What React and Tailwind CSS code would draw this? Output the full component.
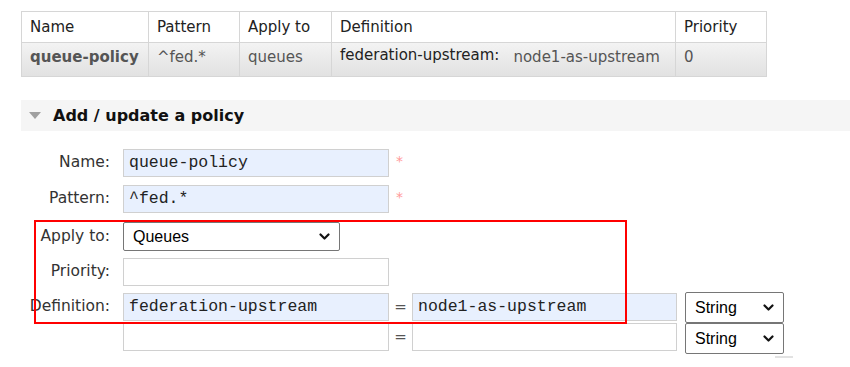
import React from 'react';

const sans = "font-['DejaVu_Sans',Verdana,sans-serif]";
const mono = "font-['Liberation_Mono','Courier_New',monospace]";
const arial = "font-['Liberation_Sans',Arial,sans-serif]";

function Chevron() {
  return (
    <svg width="11" height="8" viewBox="0 0 11 8" className="shrink-0">
      <path d="M1.5 1.5 L5.5 5.5 L9.5 1.5" fill="none" stroke="#111" strokeWidth="2.2" strokeLinecap="round" strokeLinejoin="round" />
    </svg>
  );
}

function FakeSelect({ value, className }) {
  return (
    <div className={`flex items-center justify-between border border-[#767676] rounded-[2px] bg-white pl-[9px] pr-[9px] ${arial} text-[16px] text-black ${className}`}>
      <span>{value}</span>
      <Chevron />
    </div>
  );
}

function TextBox({ value = '', filled = false, className = '' }) {
  return (
    <div className={`h-[28px] border border-[#d0d0d0] flex items-center pl-[5px] ${mono} text-[16.5px] text-[#222] ${filled ? 'bg-[#e8f0fe]' : 'bg-white'} ${className}`}>
      {value}
    </div>
  );
}

function Label({ children }) {
  return <div className={`w-[110px] text-right text-[15.5px] text-[#333] ${sans} whitespace-nowrap`}>{children}</div>;
}

export default function App() {
  const th = 'border border-[#d6d6d6] text-left font-normal px-[8px] h-[31px] align-middle bg-white text-[#222]';
  const td = 'border border-[#d6d6d6] px-[8px] h-[34px] align-top pt-[3px] text-[#555]';

  return (
    <div className={`relative w-[850px] h-[367px] overflow-hidden bg-white ${sans}`}>
      <div className="pt-[11px] pl-[21px]">
        <table className="border-collapse text-[15px] w-[746px]">
          <thead>
            <tr>
              <th className={`${th} w-[127px]`}>Name</th>
              <th className={`${th} w-[91px]`}>Pattern</th>
              <th className={`${th} w-[92px]`}>Apply to</th>
              <th className={`${th} w-[344px]`}>Definition</th>
              <th className={th}>Priority</th>
            </tr>
          </thead>
          <tbody className="bg-linear-to-b from-[#f3f3f3] to-[#e1e1e1]">
            <tr>
              <td className={`${td} font-bold text-[#111]`}>queue-policy</td>
              <td className={td}>^fed.*</td>
              <td className={td}>queues</td>
              <td className={td}>
                <div className="flex items-start">
                  <span className="text-[#222] -mt-[2px]">federation-upstream:</span>
                  <span className="ml-[14px]">node1-as-upstream</span>
                </div>
              </td>
              <td className={td}>0</td>
            </tr>
          </tbody>
        </table>
      </div>

      <div className="mt-[23px] ml-[21px] h-[31px] bg-[#f5f5f5] flex items-center">
        <svg width="12" height="7" viewBox="0 0 12 7" className="ml-[8px]">
          <path d="M0 0 H12 L6 7 Z" fill="#a0a0a0" />
        </svg>
        <span className="ml-[12px] text-[16px] font-bold text-[#111]">Add / update a policy</span>
      </div>

      <div className="mt-[18px] flex flex-col">
        <div className="flex items-center h-[28px] gap-[13px]">
          <Label>Name:</Label>
          <TextBox value="queue-policy" filled className="w-[266px]" />
          <span className="self-start mt-[2px] -ml-[6px] text-[14px] text-[#f99]">*</span>
        </div>
        <div className="flex items-center h-[28px] gap-[13px] mt-[8px]">
          <Label>Pattern:</Label>
          <TextBox value="^fed.*" filled className="w-[266px]" />
          <span className="self-start mt-[2px] -ml-[6px] text-[14px] text-[#f99]">*</span>
        </div>
        <div className="flex items-center h-[29px] gap-[13px] mt-[9px]">
          <Label>Apply to:</Label>
          <FakeSelect value="Queues" className="w-[217px] h-[29px]" />
        </div>
        <div className="flex items-center h-[28px] gap-[13px] mt-[7px]">
          <Label>Priority:</Label>
          <TextBox className="w-[266px]" />
        </div>
        <div className="flex items-start h-[31px] mt-[6px]">
          <div className="h-[28px] mt-[1px] flex items-center">
            <Label>Definition:</Label>
          </div>
          <TextBox value="federation-upstream" filled className="w-[266px] mt-[1px] ml-[13px]" />
          <div className="w-[23px] h-[28px] mt-[1px] flex items-center justify-center text-[15px] text-[#555]">=</div>
          <TextBox value="node1-as-upstream" filled className="w-[265px] mt-[1px]" />
          <FakeSelect value="String" className="w-[99px] h-[31px] ml-[8px]" />
        </div>
        <div className="flex items-start h-[31px]">
          <div className="w-[110px]" />
          <TextBox className="w-[266px] ml-[13px]" />
          <div className="w-[23px] h-[28px] flex items-center justify-center text-[15px] text-[#555]">=</div>
          <TextBox className="w-[265px]" />
          <FakeSelect value="String" className="w-[99px] h-[31px] ml-[8px]" />
        </div>
        <div className="ml-[775px] mt-[2px] w-[18px] h-[2px] bg-[#e2e2e2]" />
      </div>

      <div className="absolute left-[34px] top-[220px] w-[593px] h-[104px] border-2 border-[#ff0000] pointer-events-none" />
    </div>
  );
}
